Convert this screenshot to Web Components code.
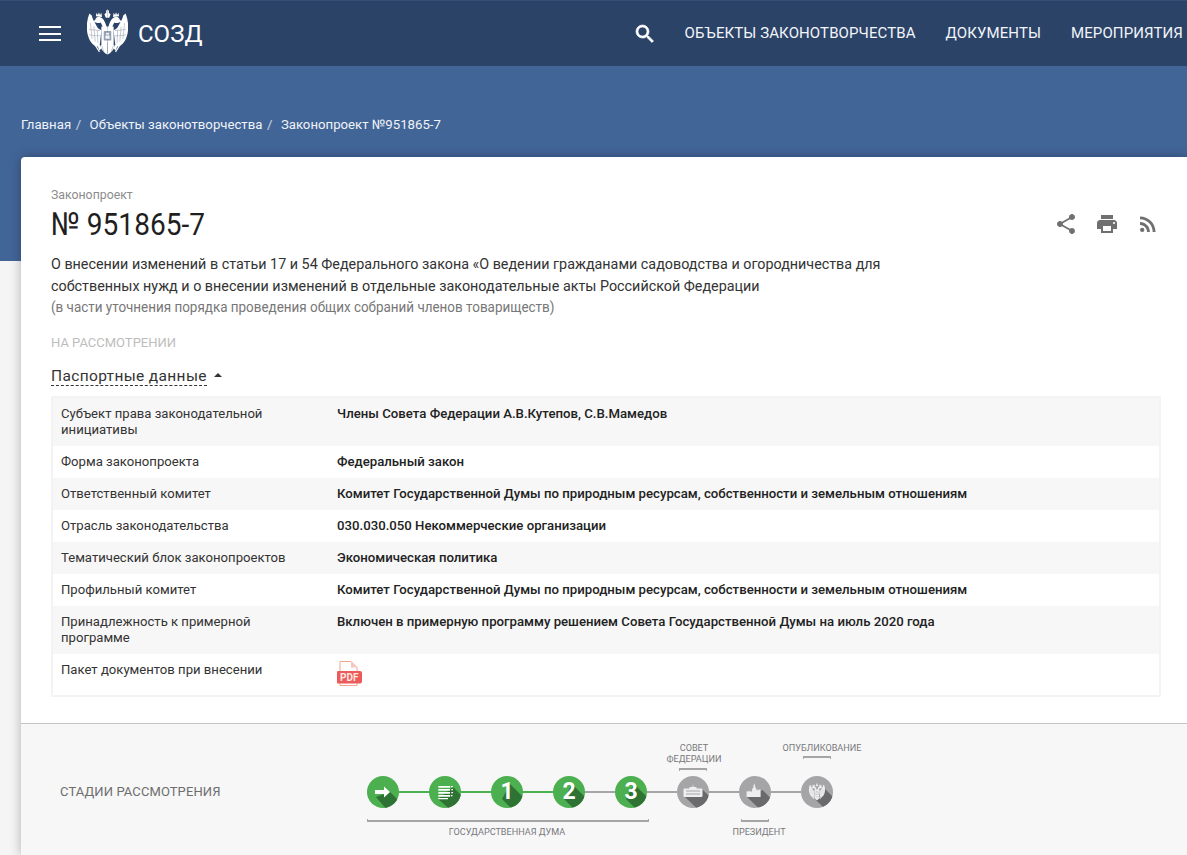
<!doctype html>
<html lang="ru">
<head>
<meta charset="utf-8">
<title>СОЗД</title>
<style>
  html, body { margin: 0; padding: 0; }
  body { font-family: Roboto, "Liberation Sans", sans-serif; background: #f5f5f5; width: 1187px; height: 855px; overflow: hidden; }
</style>
</head>
<body>
<sozd-header></sozd-header>
<sozd-hero>
  <sozd-crumbs></sozd-crumbs>
</sozd-hero>
<sozd-card>
  <sozd-title></sozd-title>
  <sozd-passport></sozd-passport>
  <sozd-stages slot="footer"></sozd-stages>
</sozd-card>

<script>
// half of the coat of arms, mirrored for the other side. drawn in a 120x132 box
const EAGLE_HALF = `
  <path d="M7 12C-2 34-3 60 4 80c4 15 15 26 26 29l8-9 4-40c-6-2-12-6-15-14C21 36 16 28 14 18z"/>
  <path d="M50 62c-4-10-6-18-10-24-4 2-8 2-14 0l-8-2 6-6c2-6 8-10 14-8 8 2 14 12 18 24l4 16z"/>
  <path d="M26 20l2-10 4 6 3-8 3 8 4-6 2 12z"/>
  <path d="M42 50h18v55H42z"/>
  <path d="M42 104h18v28c-10-4-18-14-20-22z"/>
  <path d="M60 0l-4 4v6l-5 4 4 10h5z"/>
  <path d="M18 98l3-2 17 27-3 2z"/>
  <path d="M30 104l8-2 4 12-6 6z"/>`;

function eagle(detail) {
  return `${EAGLE_HALF}
    <g transform="matrix(-1 0 0 1 120 0)">${EAGLE_HALF}</g>
    <g fill="none" stroke="${detail}" stroke-width="1.600" opacity=".5">
      <path d="M10 40l5 46M20 50l4 44M30 60l2 38M110 40l-5 46M100 50l-4 44M90 60l-2 38"/>
      <path d="M6 58c8 2 16 2 32 4M6 74c8 2 18 3 32 3M114 58c-8 2-16 2-32 4M114 74c-8 2-18 3-32 3"/>
      <path d="M44 108l6 20M76 108l-6 20M60 96v32"/>
    </g>
    <rect x="49" y="63" width="22" height="28" rx="2" fill="${detail}" opacity=".5"/>
    <path d="M56 68h8v6h-8zM54 76h12v10H54z" opacity=".9"/>`;
}

class SozdHeader extends HTMLElement {
  constructor() {
    super();
    this.attachShadow({ mode: 'open' }).innerHTML = `
      <style>
        :host { display: flex; align-items: center; height: 65px; background: #2c4368; border-top: 1px solid #344e76; color: #fff; overflow: hidden; }
        .burger { margin-left: 39px; width: 22px; display: flex; flex-direction: column; gap: 4.500px; }
        .burger i { display: block; height: 2px; background: #fff; }
        .eagle { margin-left: 26px; width: 41px; height: 46px; margin-top: -3px; fill: #fff; }
        .name { margin-left: 10px; font-size: 24px; line-height: 32px; }
        .search { margin-left: auto; width: 24px; height: 24px; fill: #fff; stroke: #fff; stroke-width: .7; }
        nav { display: flex; gap: 30px; margin-left: 27px; margin-right: 4px; padding-bottom: 1px; font-size: 15px; letter-spacing: .1px; color: #f2f5fa; white-space: nowrap; }
      </style>
      <div class="burger"><i></i><i></i><i></i></div>
      <svg class="eagle" viewBox="0 0 120 132">${eagle('#2c4368')}</svg>
      <div class="name">СОЗД</div>
      <svg class="search" viewBox="0 0 24 24"><path d="M15.5 14h-.79l-.28-.27A6.47 6.47 0 0 0 16 9.5 6.5 6.5 0 1 0 9.5 16c1.61 0 3.09-.59 4.23-1.57l.27.28v.79l5 4.99L20.49 19l-4.99-5zm-6 0C7.01 14 5 11.99 5 9.5S7.01 5 9.5 5 14 7.01 14 9.5 11.99 14 9.5 14z"/></svg>
      <nav><span>ОБЪЕКТЫ ЗАКОНОТВОРЧЕСТВА</span><span>ДОКУМЕНТЫ</span><span>МЕРОПРИЯТИЯ</span></nav>`;
  }
}

class SozdHero extends HTMLElement {
  constructor() {
    super();
    this.attachShadow({ mode: 'open' }).innerHTML = `
      <style>
        :host { display: block; height: 195px; background: #426598; padding-top: 51px; box-sizing: border-box; }
      </style>
      <slot></slot>`;
  }
}

class SozdCrumbs extends HTMLElement {
  constructor() {
    super();
    this.attachShadow({ mode: 'open' }).innerHTML = `
      <style>
        :host { display: flex; padding-left: 21px; font-size: 13.200px; line-height: 16px; color: #fff; }
        span { opacity: .93; }
        b { font-weight: 400; margin: 0 8.500px 0 4.500px; opacity: .7; }
      </style>
      <span>Главная</span><b>/</b><span>Объекты законотворчества</span><b>/</b><span>Законопроект №951865-7</span>`;
  }
}

class SozdCard extends HTMLElement {
  constructor() {
    super();
    this.attachShadow({ mode: 'open' }).innerHTML = `
      <style>
        :host { display: block; margin: -104px 0 0 21px; background: #fff; border-radius: 4px 0 0 0; box-shadow: 0 0 12px rgba(0,0,0,.28); }
        .main { padding: 30px 26px 26px 30px; height: 510px; }
        .foot { border-top: 1px solid #c4c4c4; background: #f7f7f7; height: 131px; }
      </style>
      <div class="main"><slot></slot></div>
      <div class="foot"><slot name="footer"></slot></div>`;
  }
}

class SozdTitle extends HTMLElement {
  constructor() {
    super();
    this.attachShadow({ mode: 'open' }).innerHTML = `
      <style>
        :host { display: block; position: relative; color: #222; }
        .kind { font-size: 12.300px; line-height: 16px; color: #8c8c8c; }
        h1 { margin: 1px 0 0; font-weight: 400; font-size: 32px; line-height: 40px; color: #1f1f1f; transform: scaleX(.877); transform-origin: 0 0; white-space: nowrap; }
        p { margin: 9px 0 0; width: 850px; font-size: 14.330px; line-height: 22px; color: #333; }
        .sub { font-size: 14px; line-height: 20px; color: #777; transform: scaleX(.96); transform-origin: 0 0; white-space: nowrap; }
        .state { margin-top: 18px; font-size: 13px; line-height: 16px; color: #bdbdbd; }
        .tools { position: absolute; right: 1px; top: 25px; display: flex; gap: 17px; fill: #707070; }
        svg { width: 24px; height: 24px; display: block; }
      </style>
      <div class="kind">Законопроект</div>
      <h1>№ 951865-7</h1>
      <p>О внесении изменений в статьи 17 и 54 Федерального закона «О ведении гражданами садоводства и огородничества для собственных нужд и о внесении изменений в отдельные законодательные акты Российской Федерации</p>
      <div class="sub">(в части уточнения порядка проведения общих собраний членов товариществ)</div>
      <div class="state">НА РАССМОТРЕНИИ</div>
      <div class="tools">
        <svg viewBox="0 0 24 24"><path d="M18 16.08c-.76 0-1.44.3-1.96.77L8.91 12.7c.05-.23.09-.46.09-.7s-.04-.47-.09-.7l7.05-4.11c.54.5 1.25.81 2.04.81 1.66 0 3-1.34 3-3s-1.34-3-3-3-3 1.34-3 3c0 .24.04.47.09.7L8.04 9.81C7.5 9.31 6.79 9 6 9c-1.66 0-3 1.34-3 3s1.34 3 3 3c.79 0 1.5-.31 2.04-.81l7.12 4.16c-.05.21-.08.43-.08.65 0 1.61 1.31 2.92 2.92 2.92s2.92-1.31 2.92-2.92-1.31-2.92-2.92-2.92z"/></svg>
        <svg viewBox="0 0 24 24"><path d="M19 8H5c-1.66 0-3 1.34-3 3v6h4v4h12v-4h4v-6c0-1.66-1.34-3-3-3zm-3 11H8v-5h8v5zm3-7c-.55 0-1-.45-1-1s.45-1 1-1 1 .45 1 1-.45 1-1 1zm-1-9H6v4h12V3z"/></svg>
        <svg viewBox="0 0 24 24"><circle cx="6.18" cy="17.82" r="2.18"/><path d="M4 4.44v2.83c7.03 0 12.73 5.7 12.73 12.73h2.83c0-8.59-6.97-15.56-15.56-15.56zm0 5.66v2.83c3.9 0 7.07 3.17 7.07 7.07h2.83c0-5.47-4.43-9.9-9.9-9.9z"/></svg>
      </div>`;
  }
}

class SozdPassport extends HTMLElement {
  constructor() {
    super();
    const rows = [
      ['Субъект права законодательной инициативы', 'Члены Совета Федерации А.В.Кутепов, С.В.Мамедов'],
      ['Форма законопроекта', 'Федеральный закон'],
      ['Ответственный комитет', 'Комитет Государственной Думы по природным ресурсам, собственности и земельным отношениям'],
      ['Отрасль законодательства', '030.030.050 Некоммерческие организации'],
      ['Тематический блок законопроектов', 'Экономическая политика'],
      ['Профильный комитет', 'Комитет Государственной Думы по природным ресурсам, собственности и земельным отношениям'],
      ['Принадлежность к примерной программе', 'Включен в примерную программу решением Совета Государственной Думы на июль 2020 года'],
      ['Пакет документов при внесении', '']
    ];
    const pdf = `<svg class="pdf" width="26" height="26" viewBox="0.5 0 26 26">
        <path d="M3.500 .5h11l6 6v18h-17z" fill="#fff" stroke="#f3a58f"/><path d="M14.500 .5v6h6z" fill="#f3c9bd"/>
        <rect x="0" y="10" width="25.500" height="12.500" rx="2" fill="#ec5b5b"/>
        <text x="12.700" y="20.200" text-anchor="middle" font-size="10" font-weight="700" fill="#ffe9e0" font-family="Roboto, sans-serif">PDF</text></svg>`;
    this.attachShadow({ mode: 'open' }).innerHTML = `
      <style>
        :host { display: block; margin-top: 13px; color: #333; }
        .toggle { display: flex; align-items: center; height: 24px; font-size: 15.500px; color: #333; }
        .toggle span { border-bottom: 1px dashed #333; line-height: 18px; letter-spacing: .35px; }
        .toggle i { margin: -2px 0 0 7px; border: 4px solid transparent; border-top: 0; border-bottom: 4px solid #333; width: 0; }
        .table { margin-top: 8px; border: 2px solid #f3f3f3; border-radius: 2px; width: 1106px; font-size: 13.120px; line-height: 16px; }
        .row { display: grid; grid-template-columns: 276px 1fr; padding: 8px 8px; background: #fff; }
        .row:nth-child(odd) { background: #f7f7f7; }
        .row > div:first-child { color: #333; width: 230px; }
        .row > div:last-child { font-size: 13.200px; font-weight: 500; color: #222; }
        .pdf { display: block; margin-top: -1px; }
      </style>
      <div class="toggle"><span>Паспортные данные</span><i></i></div>
      <div class="table">
        ${rows.map(r => `<div class="row"><div>${r[0]}</div><div>${r[1] || pdf}</div></div>`).join('')}
      </div>`;
  }
}

class SozdStage extends HTMLElement {
  constructor() {
    super();
    this.attachShadow({ mode: 'open' });
  }
  connectedCallback() {
    const green = this.getAttribute('color') === 'green';
    const base = green ? '#4caf50' : '#a5a5a8';
    const dark = green ? '#2f7334' : '#6a6a6d';
    const digit = n => `<text x="16" y="23.300" text-anchor="middle" font-size="23" font-weight="700" fill="#fff" font-family="Roboto, sans-serif">${n}</text>`;
    const icons = {
      arrow: '<path d="M8 14h9v-3.500l6 5.500-6 5.500V18H8z" fill="#fff"/>',
      list: '<path d="M9.300 10h11.700v1.800H9.300zM9.300 13h11.700v1.800H9.300zM9.300 16h11.700v1.800H9.300zM9.300 19h11.700v1.800H9.300zM9.300 22h9.700v1.200H9.300zM21.800 10h2v1.200h-2zM22.300 13h1.700v1.200h-1.700zM22.300 16h1.700v1.200h-1.700zM21.800 19h1.700v1.200h-1.700z" fill="#fff"/>',
      1: digit(1), 2: digit(2), 3: digit(3),
      council: '<path d="M15.500 9.500h1v1.500h3v1.500h5a1 1 0 0 1 1 1v6.500a1 1 0 0 1-1 1h-17a1 1 0 0 1-1-1v-6.500a1 1 0 0 1 1-1h5V11h3z" fill="#eee"/><path d="M9 14.500h14v1H9zM9 17.500h14v1H9z" fill="#a5a5a8"/>',
      kremlin: '<path d="M7.600 21v-5.500h1v-1l1 1h1v-1l1 1h1.500v-2.500l1-1 .5-2.500.7-2.300.7 2.300.5 2.500 1 1v1.500h1v-1.500l1 1h1v-1l1.100 1V21z" fill="#eee"/>',
      eagle: `<g transform="translate(8 7.300) scale(.133 .128)" fill="#eee">${eagle('#a5a5a8')}</g>`
    };
    const kind = this.getAttribute('kind');
    const shadowPts = {
      arrow: '23,16 38,31 27,42 9,21',
      list: '24,11 44,31 32,43 9,23',
      council: '25,13 45,33 33,45 8,21',
      kremlin: '23.600,14 44,34.500 33,45 8,21',
      eagle: '24,13 46,35 36,45 13,22'
    }[kind] || '19,8 42,31 30,42 11,23';
    this.shadowRoot.innerHTML = `
      <style>
        :host { display: block; width: 32px; height: 32px; flex: none; }
        svg { display: block; }
      </style>
      <svg width="32" height="32" viewBox="0 0 32 32">
        <clipPath id="c"><circle cx="16" cy="16" r="16"/></clipPath>
        <circle cx="16" cy="16" r="16" fill="${base}"/>
        <polygon points="${shadowPts}" fill="${dark}" clip-path="url(#c)"/>
        ${icons[kind]}
      </svg>`;
  }
}

class SozdStages extends HTMLElement {
  constructor() {
    super();
    const seq = [
      ['arrow', 'green', 'green'], ['list', 'green', 'green'], ['1', 'green', 'green'],
      ['2', 'green', 'grey'], ['3', 'green', 'grey'], ['council', 'grey', 'grey'],
      ['kremlin', 'grey', 'grey'], ['eagle', 'grey', '']
    ];
    const track = seq.map(s => `<sozd-stage kind="${s[0]}" color="${s[1]}"></sozd-stage>` +
      (s[2] ? `<i class="line ${s[2]}"></i>` : '')).join('');
    this.attachShadow({ mode: 'open' }).innerHTML = `
      <style>
        :host { display: flex; height: 100%; }
        .title { width: 307px; padding: 60px 0 0 39px; font-size: 13px; line-height: 16px; color: #6e6e6e; letter-spacing: .1px; }
        .diagram { position: relative; margin-top: 52px; height: 32px; display: flex; align-items: center; width: 480px; }
        .line { width: 30px; height: 2px; display: block; flex: none; }
        .green { background: #4caf50; }
        .grey { background: #a5a5a8; }
        .lab { position: absolute; font-size: 9.100px; line-height: 11px; text-align: center; color: #77777c; white-space: nowrap; transform: translateX(-50%); }
        .br { position: absolute; height: 2px; background: #a5a5a8; }
        .br::before, .br::after { content: ""; position: absolute; width: 1px; height: 3px; background: #a5a5a8; }
        .br::before { left: 0; } .br::after { right: 0; }
        .br.up::before, .br.up::after { top: 0; }
        .br.down::before, .br.down::after { bottom: 0; }
      </style>
      <div class="title">СТАДИИ РАССМОТРЕНИЯ</div>
      <div class="diagram">${track}
        <div class="br down" style="left:0;top:44px;width:282px"></div>
        <div class="lab" style="left:140px;top:51px">ГОСУДАРСТВЕННАЯ ДУМА</div>
        <div class="lab" style="left:327px;top:-33px">СОВЕТ<br>ФЕДЕРАЦИИ</div>
        <div class="br up" style="left:312px;top:-8px;width:28px"></div>
        <div class="br down" style="left:374px;top:44px;width:28px"></div>
        <div class="lab" style="left:392px;top:51px">ПРЕЗИДЕНТ</div>
        <div class="lab" style="left:455px;top:-33px">ОПУБЛИКОВАНИЕ</div>
        <div class="br up" style="left:436px;top:-20px;width:28px"></div>
      </div>`;
  }
}

customElements.define('sozd-header', SozdHeader);
customElements.define('sozd-hero', SozdHero);
customElements.define('sozd-crumbs', SozdCrumbs);
customElements.define('sozd-card', SozdCard);
customElements.define('sozd-title', SozdTitle);
customElements.define('sozd-passport', SozdPassport);
customElements.define('sozd-stage', SozdStage);
customElements.define('sozd-stages', SozdStages);
</script>
</body>
</html>
